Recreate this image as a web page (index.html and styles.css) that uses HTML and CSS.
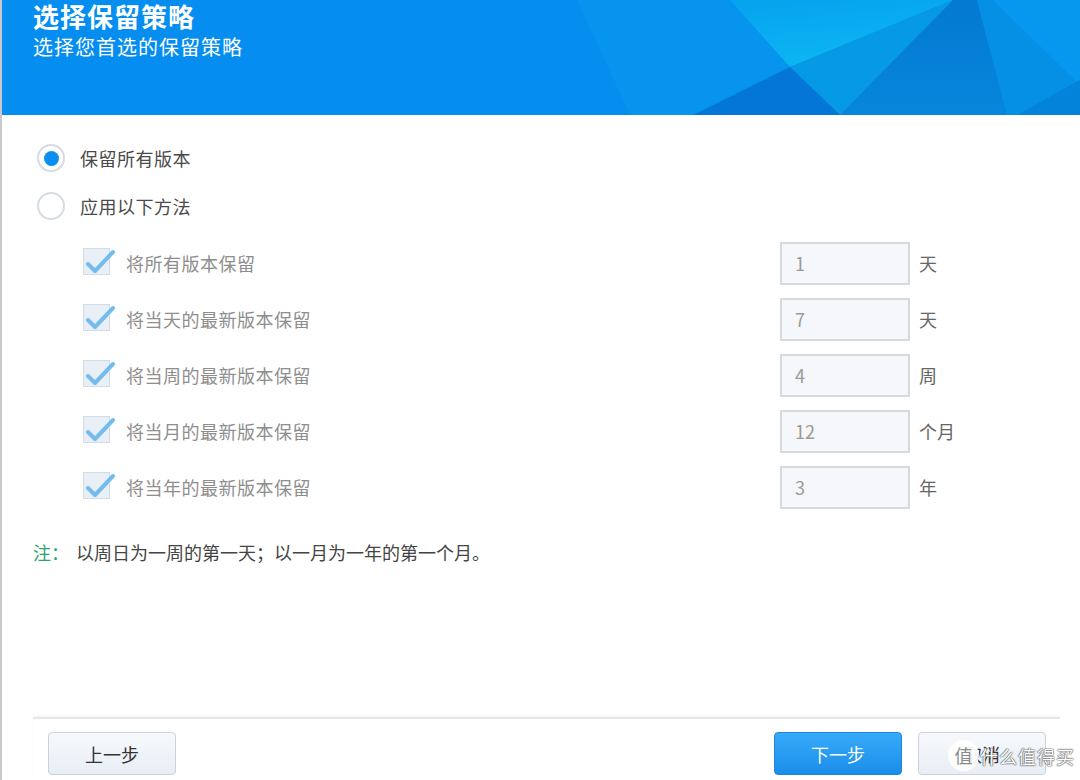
FILE: index.html
```html
<!DOCTYPE html>
<html lang="zh-CN">
<head>
    <meta charset="UTF-8">
    <title>选择保留策略</title>
    <link rel="stylesheet" href="styles.css">
</head>
<body>
    <div class="wizard">
        <!-- Header banner -->
        <div class="header">
            <svg class="header-bg" viewBox="0 0 1078 115" preserveAspectRatio="none">
                <defs>
                    <linearGradient id="glow" x1="0" y1="0" x2="0.3" y2="1">
                        <stop offset="0" stop-color="#06a2ee"/>
                        <stop offset="1" stop-color="#0cb6f2"/>
                    </linearGradient>
                    <linearGradient id="dark" x1="0" y1="0" x2="0" y2="1">
                        <stop offset="0" stop-color="#0479d2"/>
                        <stop offset="1" stop-color="#0686dc"/>
                    </linearGradient>
                </defs>
                <rect width="1078" height="115" fill="#058ef0"/>
                <polygon points="575,0 728,0 788,67 691,115 628,115" fill="#0694ef"/>
                <polygon points="728,0 951,0 788,67" fill="url(#glow)"/>
                <polygon points="951,0 788,67 838,115" fill="#0599e6"/>
                <polygon points="691,115 788,67 838,115" fill="#0477d6"/>
                <polygon points="951,0 975,0 1005,115 838,115" fill="url(#dark)"/>
                <polygon points="975,0 991,0 1061,67 1078,85 1078,115 1005,115" fill="#0590e6"/>
                <polygon points="991,0 1078,0 1078,85" fill="#0598ee"/>
                <polygon points="1015,115 1078,80 1078,115" fill="#0483da"/>
            </svg>
            <div class="title">选择保留策略</div>
            <div class="subtitle">选择您首选的保留策略</div>
        </div>

        <div class="content">
            <label class="radio-row">
                <span class="radio checked"></span>
                <span class="radio-label">保留所有版本</span>
            </label>
            <label class="radio-row">
                <span class="radio"></span>
                <span class="radio-label">应用以下方法</span>
            </label>

            <div class="rules">
                <div class="rule">
                    <span class="check"><svg viewBox="0 0 30 30"><path d="M4 17 L11 24 L29 5" /></svg></span>
                    <span class="rule-label">将所有版本保留</span>
                    <span class="num-input">1</span>
                    <span class="unit">天</span>
                </div>
                <div class="rule">
                    <span class="check"><svg viewBox="0 0 30 30"><path d="M4 17 L11 24 L29 5" /></svg></span>
                    <span class="rule-label">将当天的最新版本保留</span>
                    <span class="num-input">7</span>
                    <span class="unit">天</span>
                </div>
                <div class="rule">
                    <span class="check"><svg viewBox="0 0 30 30"><path d="M4 17 L11 24 L29 5" /></svg></span>
                    <span class="rule-label">将当周的最新版本保留</span>
                    <span class="num-input">4</span>
                    <span class="unit">周</span>
                </div>
                <div class="rule">
                    <span class="check"><svg viewBox="0 0 30 30"><path d="M4 17 L11 24 L29 5" /></svg></span>
                    <span class="rule-label">将当月的最新版本保留</span>
                    <span class="num-input">12</span>
                    <span class="unit">个月</span>
                </div>
                <div class="rule">
                    <span class="check"><svg viewBox="0 0 30 30"><path d="M4 17 L11 24 L29 5" /></svg></span>
                    <span class="rule-label">将当年的最新版本保留</span>
                    <span class="num-input">3</span>
                    <span class="unit">年</span>
                </div>
            </div>

            <div class="note"><span class="note-tag">注：</span>以周日为一周的第一天；以一月为一年的第一个月。</div>
        </div>

        <div class="footer">
            <button class="btn">上一步</button>
            <div class="footer-right">
                <button class="btn btn-primary">下一步</button>
                <button class="btn">取消</button>
            </div>
        </div>

        <!-- Watermark -->
        <div class="watermark">
            <span class="wm-badge">值</span>
            <span class="wm-text">什么值得买</span>
        </div>
    </div>
</body>
</html>
```

FILE: styles.css
```css
body {
    margin: 0;
    background-color: #ffffff;
    font-family: "Noto Sans CJK SC", "Noto Sans", sans-serif;
    color: #444;
}

.wizard {
    position: relative;
    height: 780px;
    border-left: 2px solid #c9c9cc;
    display: flex;
    flex-direction: column;
    overflow: hidden;
}

/* Header */
.header {
    position: relative;
    height: 115px;
    padding-left: 31px;
    color: #ffffff;
    flex-shrink: 0;
}

.header-bg {
    position: absolute;
    left: 0;
    top: 0;
    width: 100%;
    height: 100%;
}

.title {
    position: relative;
    font-size: 26px;
    font-weight: bold;
    line-height: 32px;
    letter-spacing: 1px;
}

.subtitle {
    position: relative;
    font-size: 20px;
    line-height: 30px;
    letter-spacing: 1px;
}

/* Options */
.content {
    padding-top: 19px;
}

.radio-row {
    display: flex;
    align-items: center;
    height: 48px;
    padding-left: 35px;
}

.radio {
    width: 24px;
    height: 24px;
    border: 2px solid #d5dce5;
    border-radius: 50%;
    display: flex;
    align-items: center;
    justify-content: center;
    background: #fff;
}

.radio.checked::after {
    content: "";
    width: 15px;
    height: 15px;
    border-radius: 50%;
    background-color: #0a8ef0;
}

.radio-label {
    margin-left: 15px;
    font-size: 18px;
    letter-spacing: 0.5px;
    color: #4a4a4a;
}

.rules {
    margin-top: 5px;
}

.rule {
    display: flex;
    align-items: center;
    height: 56px;
    padding-left: 81px;
}

.check {
    position: relative;
    width: 25px;
    height: 25px;
    border: 1px solid #d3dbe5;
    background-color: #e9eff6;
    margin-top: -3px;
}

.check svg {
    position: absolute;
    left: -1px;
    top: -2px;
    width: 32px;
    height: 30px;
}

.check path {
    fill: none;
    stroke: #74bbee;
    stroke-width: 4;
    stroke-linecap: round;
    stroke-linejoin: round;
}

.rule-label {
    flex: 1;
    margin-left: 16px;
    font-size: 18px;
    letter-spacing: 0.5px;
    color: #8e8e8e;
}

.num-input {
    box-sizing: border-box;
    width: 130px;
    height: 43px;
    border: 2px solid #d3dae2;
    background-color: #f5f7fa;
    padding-left: 13px;
    font-size: 18px;
    line-height: 39px;
    color: #9a9a9a;
}

.unit {
    width: 161px;
    padding-left: 9px;
    font-size: 18px;
    color: #666;
}

.note {
    margin-top: 25px;
    padding-left: 31px;
    height: 24px;
    line-height: 24px;
    font-size: 18px;
    color: #444;
}

.note-tag {
    color: #2aa56e;
    margin-right: 7px;
}

/* Footer */
.footer {
    margin-top: auto;
    margin-left: 31px;
    margin-right: 20px;
    border-top: 2px solid #e6e6e8;
    box-shadow: 0 -2px 3px -1px #f0f0f2;
    padding: 13px 14px 5px 15px;
    display: flex;
    justify-content: space-between;
}

.footer-right {
    display: flex;
    gap: 16px;
}

.btn {
    width: 128px;
    height: 43px;
    border: 1px solid #c9d3de;
    border-radius: 4px;
    background: linear-gradient(#f7f9fc, #e8eef5);
    font-family: inherit;
    font-size: 18px;
    color: #333;
    cursor: pointer;
}

.btn-primary {
    border-color: #1c86e0;
    background: linear-gradient(#38aafb, #1a8de9);
    color: #ffffff;
}

/* Watermark overlay */
.watermark {
    position: absolute;
    left: 946px;
    top: 740px;
    display: flex;
    align-items: center;
}

.wm-badge {
    width: 31px;
    height: 31px;
    border-radius: 50%;
    background-color: rgba(255, 255, 255, 0.92);
    color: #8a8a8a;
    font-size: 18px;
    line-height: 31px;
    text-align: center;
}

.wm-text {
    margin-left: 1px;
    font-size: 18px;
    letter-spacing: 1px;
    color: #ffffff;
    text-shadow: 0 0 1px #444, 0 0 1px #444, 0 0 2px #888;
}
```
